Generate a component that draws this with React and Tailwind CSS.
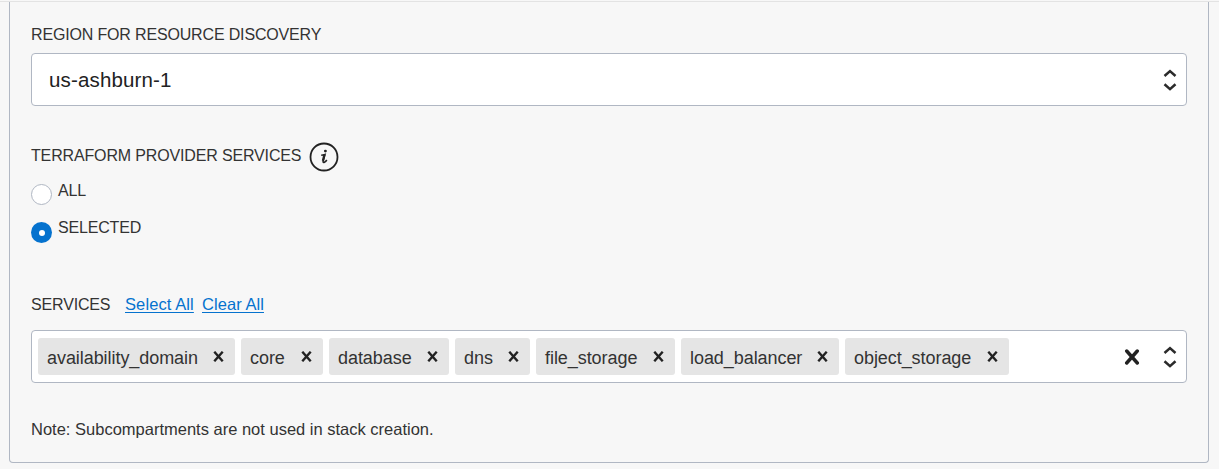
const services = [
  { name: "availability_domain", width: "w-[197px]" },
  { name: "core", width: "w-[82px]" },
  { name: "database", width: "w-[120px]" },
  { name: "dns", width: "w-[75px]" },
  { name: "file_storage", width: "w-[139px]" },
  { name: "load_balancer", width: "w-[158px]" },
  { name: "object_storage", width: "w-[164px]" },
];

function Cross({ className }) {
  return (
    <svg viewBox="0 0 12 12" className={className} fill="none" stroke="#222" strokeWidth="2.6">
      <path d="M1.4 0.8 10.6 11.2M10.6 0.8 1.4 11.2" />
    </svg>
  );
}

function Chevrons() {
  return (
    <svg viewBox="0 0 14 24" className="h-6 w-3.5 shrink-0" fill="none" stroke="#2b2b2b" strokeWidth="2.5">
      <path d="M1.5 8 7 3.1 12.5 8M1.5 16.3 7 21.2 12.5 16.3" />
    </svg>
  );
}

function InfoIcon() {
  return (
    <svg viewBox="0 0 30 30" className="ml-2 h-[30px] w-[30px] shrink-0">
      <circle cx="15" cy="15" r="13.5" fill="none" stroke="#222" strokeWidth="1.8" />
      <circle cx="16.4" cy="9.1" r="1.45" fill="#222" />
      <path d="M12.2 13.3Q13.8 13.1 16 12.4L14.3 18.3Q13.5 21.1 15.4 20.3 16.8 19.6 17.8 18" fill="none" stroke="#222" strokeWidth="1.6" />
      <path d="M15.4 12.8 13.9 18.8" fill="none" stroke="#222" strokeWidth="2.3" />
    </svg>
  );
}

function Chip({ name, width }) {
  return (
    <div className={`flex h-[37px] shrink-0 items-center justify-between rounded-[3px] bg-[#e5e5e5] pl-[9px] pr-[11px] ${width}`}>
      <span className="pt-[3px] text-[18px] leading-5 tracking-[-0.06px]">{name}</span>
      <Cross className="h-[11px] w-[11px] shrink-0" />
    </div>
  );
}

export default function App() {
  return (
    <div className="h-[469px] overflow-hidden bg-[#f7f7f7] pt-px font-['Liberation_Sans',Arial,sans-serif] text-base text-[#333]">
      <div className="h-px bg-[#e3e3e3]" />
      <section className="ml-[9px] mr-[10px] h-[461px] rounded-b-[4px] border border-t-0 border-[#b0b7c3] px-[21px] pt-[23px]">
        <div className="h-[28px] leading-[19px] tracking-[-0.16px] whitespace-nowrap">REGION FOR RESOURCE DISCOVERY</div>
        <div className="flex h-[53px] items-center justify-between rounded-[4px] border border-[#b0b7c3] bg-white pl-[17px] pr-[9px] text-[20.5px] tracking-[0.15px] text-[#222]">
          <span className="pt-px leading-6">us-ashburn-1</span>
          <Chevrons />
        </div>
        <div className="mt-[35px] flex h-[31px] items-center">
          <span className="-mt-px w-[270px] tracking-[-0.15px] whitespace-nowrap">TERRAFORM PROVIDER SERVICES</span>
          <InfoIcon />
        </div>
        <div className="mt-[7px] flex h-[37px] gap-[6px]">
          <span className="mt-[5px] h-[21px] w-[21px] rounded-full border border-[#b0b7c3] bg-white" />
          <span className="leading-[24px] tracking-[-0.1px]">ALL</span>
        </div>
        <div className="flex h-[37px] gap-[6px]">
          <span className="mt-[6px] flex h-[21px] w-[21px] items-center justify-center rounded-full bg-[#0572ce]">
            <span className="h-[6px] w-[6px] rounded-full bg-white" />
          </span>
          <span className="leading-[24px] tracking-[-0.18px]">SELECTED</span>
        </div>
        <div className="mt-[40px] flex h-[37px] leading-[24px]">
          <span className="w-[94px] tracking-[-0.16px]">SERVICES</span>
          <a href="#select-all" className="mr-2 w-[69px] whitespace-nowrap text-[16.5px] leading-[22px] tracking-[0.1px] text-[#0572ce] underline underline-offset-2">Select All</a>
          <a href="#clear-all" className="whitespace-nowrap text-[16.5px] leading-[22px] tracking-[0.06px] text-[#0572ce] underline underline-offset-2">Clear All</a>
        </div>
        <div className="flex h-[53px] items-center gap-[6px] rounded-[4px] border border-[#b0b7c3] bg-white pl-[6px] pr-[9px]">
          {services.map((service) => (
            <Chip key={service.name} {...service} />
          ))}
          <svg viewBox="0 0 16 16" className="mr-[17px] ml-auto h-4 w-4 shrink-0" fill="none" stroke="#222" strokeWidth="3.4" strokeLinecap="round">
            <path d="M2.7 2 13.3 14M13.3 2 2.7 14" />
          </svg>
          <Chevrons />
        </div>
        <div className="mt-[36px] text-[16.5px] leading-[20px] whitespace-nowrap">Note: Subcompartments are not used in stack creation.</div>
      </section>
    </div>
  );
}
